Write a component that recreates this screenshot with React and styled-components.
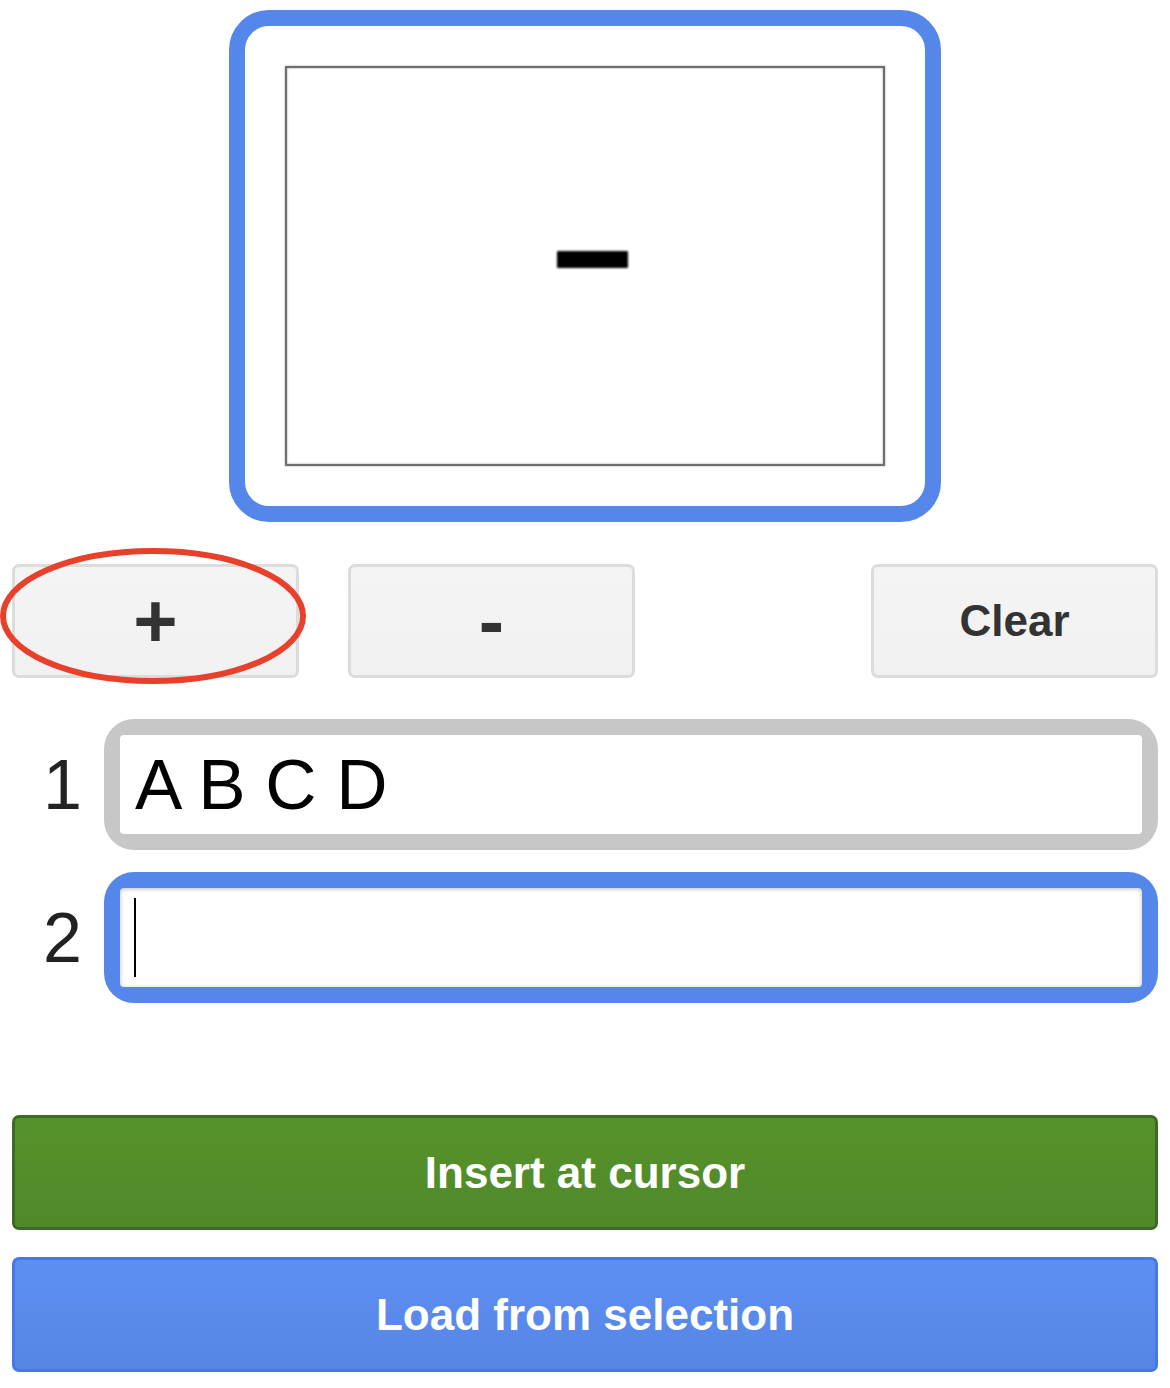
import React from "react";
import styled, { createGlobalStyle } from "styled-components";

const GlobalStyle = createGlobalStyle`
  html, body {
    margin: 0;
    padding: 0;
    background: #ffffff;
    font-family: "Liberation Sans", Arial, sans-serif;
  }
`;

const Page = styled.div`
  width: 1170px;
  box-sizing: border-box;
  padding: 10px 12px 18px 12px;
  display: flex;
  flex-direction: column;
`;

const PreviewFrame = styled.div`
  align-self: center;
  border: 16px solid #5586ea;
  border-radius: 40px;
  padding: 40px;
  background: #ffffff;
`;

const Canvas = styled.div`
  width: 600px;
  height: 400px;
  box-sizing: border-box;
  border: 2px solid #6e6e6e;
  box-shadow: inset 0 0 2px rgba(0, 0, 0, 0.45), 0 0 2px rgba(0, 0, 0, 0.35);
  background: #ffffff;
`;

const ButtonRow = styled.div`
  position: relative;
  margin-top: 42px;
  display: flex;
  gap: 49px;
`;

const GreyButton = styled.button`
  width: 287px;
  height: 114px;
  margin-left: ${(p) => (p.$pushRight ? "auto" : "0")};
  border: 3px solid #dcdcdc;
  border-radius: 7px;
  background: linear-gradient(#f4f4f4, #f1f1f1);
  color: #333333;
  font-family: "Liberation Sans", Arial, sans-serif;
  font-weight: bold;
  font-size: ${(p) => p.$size || 44}px;
  line-height: 1;
  padding: 0;
  padding-top: ${(p) => p.$nudge || 0}px;
  display: flex;
  align-items: center;
  justify-content: center;
`;

const Annotation = styled.svg`
  position: absolute;
  left: -12px;
  top: -16px;
  pointer-events: none;
`;

const Rows = styled.div`
  margin-top: 41px;
  display: flex;
  flex-direction: column;
  gap: 22px;
`;

const Row = styled.div`
  display: flex;
  align-items: center;
`;

const RowLabel = styled.div`
  width: 92px;
  box-sizing: border-box;
  padding-right: 22px;
  text-align: right;
  font-size: 70px;
  color: #222222;
  line-height: 1;
`;

const FieldShell = styled.div`
  flex: 1;
  padding: 16px;
  border-radius: 30px;
  background: ${(p) => (p.$focused ? "#5586ea" : "#c7c7c7")};
`;

const Field = styled.div`
  height: 99px;
  box-sizing: border-box;
  border-radius: 4px;
  background: #ffffff;
  padding: 0 15px;
  display: flex;
  align-items: center;
  font-size: 71px;
  color: #000000;
  box-shadow: ${(p) => (p.$focused ? "inset 0 1px 4px rgba(0,0,0,0.25)" : "none")};
`;

const Caret = styled.span`
  display: block;
  width: 2px;
  height: 79px;
  margin-left: -1px;
  background: #000000;
`;

const ActionButton = styled.button`
  width: 100%;
  height: 115px;
  border-radius: 7px;
  border: 3px solid ${(p) => (p.$variant === "green" ? "#3d6b27" : "#4878e6")};
  background: ${(p) =>
    p.$variant === "green"
      ? "linear-gradient(#56922a, #51892a)"
      : "linear-gradient(#5d8ff3, #5685e4)"};
  color: #ffffff;
  font-family: "Liberation Sans", Arial, sans-serif;
  font-weight: bold;
  font-size: 44px;
  padding: 0;
  margin-top: ${(p) => p.$gap}px;
`;

const App = () => {
  return (
    <>
      <GlobalStyle />
      <Page>
        <PreviewFrame>
          <Canvas>
            <svg width="596" height="396" viewBox="0 0 596 396">
              <defs>
                <filter id="soft" x="-10%" y="-30%" width="120%" height="160%">
                  <feGaussianBlur stdDeviation="0.8" />
                </filter>
              </defs>
              <rect x="270" y="183" width="71" height="17" rx="1" fill="#000" filter="url(#soft)" />
            </svg>
          </Canvas>
        </PreviewFrame>

        <ButtonRow>
          <GreyButton $size={76}>+</GreyButton>
          <GreyButton $size={76}>-</GreyButton>
          <GreyButton $pushRight>Clear</GreyButton>
          <Annotation width="320" height="150" viewBox="0 0 320 150">
            <ellipse cx="153" cy="68" rx="150" ry="65" fill="none" stroke="#e8412b" strokeWidth="6" />
          </Annotation>
        </ButtonRow>

        <Rows>
          <Row>
            <RowLabel>1</RowLabel>
            <FieldShell>
              <Field>A B C D</Field>
            </FieldShell>
          </Row>
          <Row>
            <RowLabel>2</RowLabel>
            <FieldShell $focused>
              <Field $focused>
                <Caret />
              </Field>
            </FieldShell>
          </Row>
        </Rows>

        <ActionButton $variant="green" $gap={112}>Insert at cursor</ActionButton>
        <ActionButton $variant="blue" $gap={27}>Load from selection</ActionButton>
      </Page>
    </>
  );
};

export default App;
